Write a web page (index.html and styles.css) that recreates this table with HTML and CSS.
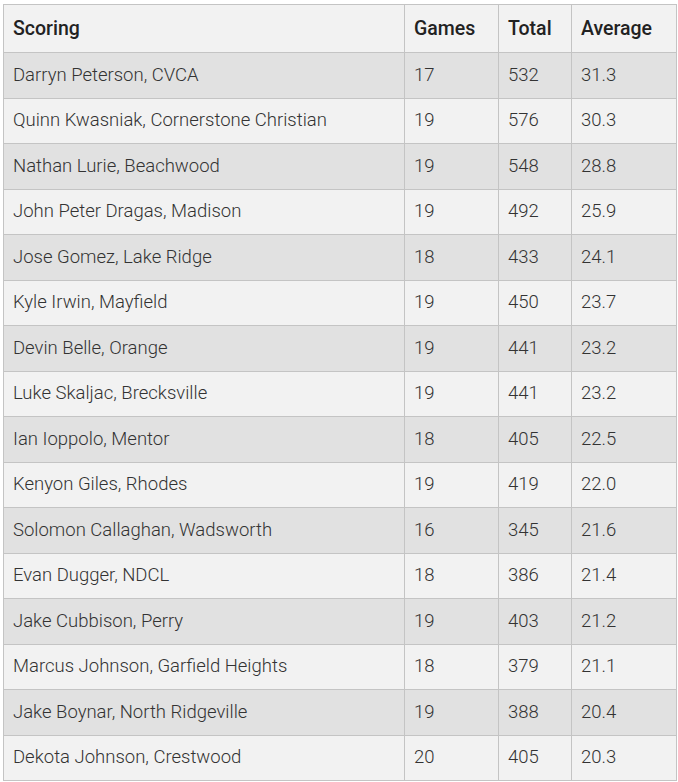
FILE: index.html
```html
<!DOCTYPE html>
<html>
<head>
<meta charset="utf-8">
<link rel="stylesheet" href="styles.css">
</head>
<body>
<table class="stats">
  <colgroup>
    <col class="c-name"><col class="c-games"><col class="c-total"><col class="c-avg">
  </colgroup>
  <thead>
    <tr><th>Scoring</th><th>Games</th><th>Total</th><th>Average</th></tr>
  </thead>
  <tbody>
    <tr><td>Darryn Peterson, CVCA</td><td>17</td><td>532</td><td>31.3</td></tr>
    <tr><td>Quinn Kwasniak, Cornerstone Christian</td><td>19</td><td>576</td><td>30.3</td></tr>
    <tr><td>Nathan Lurie, Beachwood</td><td>19</td><td>548</td><td>28.8</td></tr>
    <tr><td>John Peter Dragas, Madison</td><td>19</td><td>492</td><td>25.9</td></tr>
    <tr><td>Jose Gomez, Lake Ridge</td><td>18</td><td>433</td><td>24.1</td></tr>
    <tr><td>Kyle Irwin, Mayfield</td><td>19</td><td>450</td><td>23.7</td></tr>
    <tr><td>Devin Belle, Orange</td><td>19</td><td>441</td><td>23.2</td></tr>
    <tr><td>Luke Skaljac, Brecksville</td><td>19</td><td>441</td><td>23.2</td></tr>
    <tr><td>Ian Ioppolo, Mentor</td><td>18</td><td>405</td><td>22.5</td></tr>
    <tr><td>Kenyon Giles, Rhodes</td><td>19</td><td>419</td><td>22.0</td></tr>
    <tr><td>Solomon Callaghan, Wadsworth</td><td>16</td><td>345</td><td>21.6</td></tr>
    <tr><td>Evan Dugger, NDCL</td><td>18</td><td>386</td><td>21.4</td></tr>
    <tr><td>Jake Cubbison, Perry</td><td>19</td><td>403</td><td>21.2</td></tr>
    <tr><td>Marcus Johnson, Garfield Heights</td><td>18</td><td>379</td><td>21.1</td></tr>
    <tr><td>Jake Boynar, North Ridgeville</td><td>19</td><td>388</td><td>20.4</td></tr>
    <tr><td>Dekota Johnson, Crestwood</td><td>20</td><td>405</td><td>20.3</td></tr>
  </tbody>
</table>
</body>
</html>
```
FILE: styles.css
```css
html, body {
  margin: 0;
  padding: 0;
  background: #ffffff;
}
body {
  padding: 4px 2px 0 3px;
}
.stats {
  border-collapse: collapse;
  width: 673px;
  table-layout: fixed;
  font-family: Roboto, "Liberation Sans", sans-serif;
  font-size: 18.5px;
  color: #333333;
}
.c-name { width: 401px; }
.c-games { width: 94px; }
.c-total { width: 73px; }
.c-avg { width: 105px; }
.stats th, .stats td {
  border: 1px solid #c4c4c4;
  text-align: left;
  padding: 0 0 0 9px;
  white-space: nowrap;
}
.stats th {
  height: 47px;
  font-size: 19.5px;
  font-weight: 500;
  color: #222222;
  background: #f2f2f2;
}
.stats td {
  height: 43.5px;
  font-weight: 300;
  padding-bottom: 1px;
}
.stats tbody tr:nth-child(odd) td { background: #e1e1e1; }
.stats tbody tr:nth-child(even) td { background: #f2f2f2; }
```
